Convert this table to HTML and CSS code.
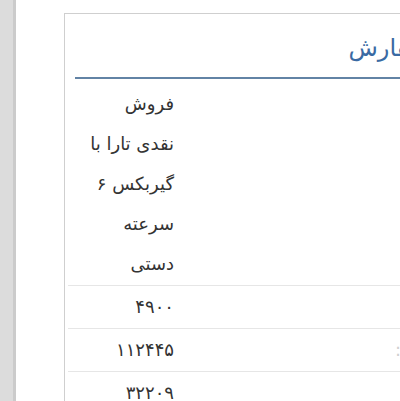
FILE: index.html
```html
<!DOCTYPE html>
<html lang="fa">
<head>
<meta charset="utf-8">
<title>سفارش</title>
<link rel="stylesheet" href="styles.css">
</head>
<body>
<div class="shell">
  <aside class="rail"></aside>
  <main class="page">
    <section class="card" dir="rtl">
      <h2 class="title">سفارش</h2>
      <table class="grid">
        <tbody>
          <tr class="first">
            <td class="c-main"></td>
            <td class="c-text">فروش نقدی تارا با گیربکس ۶ سرعته دستی</td>
          </tr>
          <tr>
            <td class="c-main"></td>
            <td class="c-text">۴۹۰۰</td>
          </tr>
          <tr>
            <td class="c-main"><span class="faint">جمع :</span></td>
            <td class="c-text">۱۱۲۴۴۵</td>
          </tr>
          <tr>
            <td class="c-main"></td>
            <td class="c-text">۳۲۲۰۹</td>
          </tr>
        </tbody>
      </table>
    </section>
  </main>
</div>
</body>
</html>
```
FILE: styles.css
```css
html, body {
  margin: 0;
  padding: 0;
  background: #ffffff;
  overflow: hidden;
  height: 401px;
}

.shell {
  display: flex;
  width: 540px;
  height: 401px;
  font-family: "DejaVu Sans", "Noto Sans", sans-serif;
  color: #333333;
}

.rail {
  flex: 0 0 13px;
  background: #dcdcdc;
  border-right: 3px solid #cbcbcb;
}

.page {
  flex: 1 1 auto;
  padding: 13px 0 0 48px;
}

.card {
  width: 386px;
  border: 1px solid #cfcfcf;
  border-bottom: none;
  background: #fff;
  min-height: 420px;
}

.title {
  margin: 0 10px;
  padding: 16px 12px 11px 0;
  font-size: 24px;
  line-height: 36px;
  font-weight: normal;
  color: #3a6aa3;
  border-bottom: 2px solid #6283a5;
  text-align: right;
}

.grid {
  margin: 4px 3px 0;
  width: calc(100% - 6px);
  border-collapse: collapse;
  font-size: 18px;
  line-height: 40px;
}

.grid td {
  padding: 1px 0;
  border-top: 1px solid #e6e6e6;
  vertical-align: top;
  text-align: right;
}

.grid tr.first td {
  border-top: none;
}

.c-text {
  width: 88px;
  padding-right: 11px !important;
  padding-left: 18px !important;
}

.c-main {
  padding-right: 10px !important;
}

.faint {
  color: #d0d0d0;
}
```
